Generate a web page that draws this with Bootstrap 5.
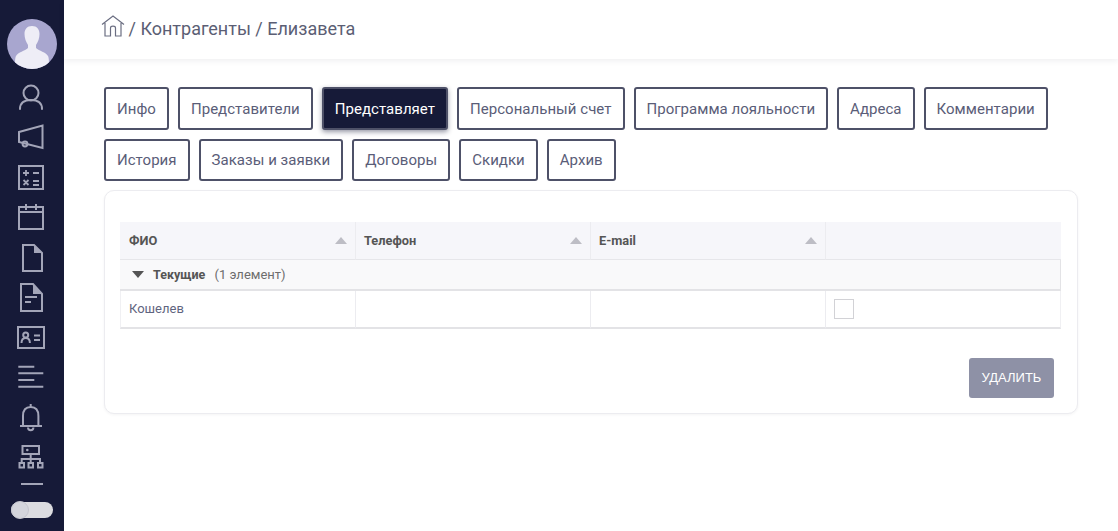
<!DOCTYPE html>
<html lang="ru">
<head>
<meta charset="utf-8">
<title>Елизавета</title>
<link href="https://cdn.jsdelivr.net/npm/bootstrap@5.3.0/dist/css/bootstrap.min.css" rel="stylesheet">
<style>
html,body{height:100%;overflow:hidden}
body{font-family:Roboto,"Liberation Sans",sans-serif;background:#fff;color:#50536c}
.app-shell{height:531px}
.side-rail{width:64px;flex:none;background:#161a38;padding-top:19px;height:531px;overflow:hidden}
.ava{width:50px;height:50px;display:block;margin-bottom:8px;flex:none}
.rail-ico{display:block;width:40px;height:40px;flex:none;fill:none;stroke:#a3a5b8;stroke-width:2}
.rail-ico .solid{fill:#a3a5b8;stroke:none}
.rail-dash{width:22px;height:2px;background:#a3a5b8;margin-top:6px;flex:none}
.rail-toggle{width:42px;height:16px;border-radius:8px;background:#dcdce0;margin-top:17px;flex:none;position:relative}
.rail-knob{position:absolute;left:0;top:-1px;width:18px;height:18px;border-radius:50%;background:#d4d5dc;border:1px solid #c4c5ce}
.main-pane{min-width:0}
.top-head{height:59px;box-shadow:0 2px 6px rgba(30,30,60,.07);padding:0 0 3px 37px;font-size:18px;color:#5b5e74}
.top-head svg{flex:none;margin-right:3.5px}
.tab-wrap{padding:28px 40px 0;gap:9px}
.tab-btn{font-size:15px;line-height:18px;padding:10.5px 11px;border:2px solid #4e5168;border-radius:3px;background:#fff;color:#5a5d78;letter-spacing:.035px}
.tab-btn.is-on{background:#161a38;color:#fff;box-shadow:0 2px 5px rgba(22,26,56,.45)}
.tab-btn.low-row{padding-top:10px;padding-bottom:10px}
.panel-box{margin:9px 0 0 40px;width:974px;height:224px;border:1px solid #ececf0;border-radius:10px;padding:31px 16px 0 15px;box-shadow:0 1px 3px rgba(30,30,60,.05)}
.grid-tbl{table-layout:fixed;width:941px;border-collapse:separate;border-spacing:0;margin:0}
.grid-tbl th{height:38px;background:#f6f6fa;font-weight:700;color:#555;padding:0 9px 0 8px;border-right:1px solid #ececf0;border-bottom:1px solid #e6e6ea;position:relative;font-size:12.8px}
.grid-tbl th:first-child{padding-left:9px}
.grid-tbl th:last-child{border-right:0}
.sort-up{position:absolute;right:8px;top:15px;width:0;height:0;border-left:6px solid transparent;border-right:6px solid transparent;border-bottom:7px solid #bdbdc5}
.group-row td{height:31px;background:#f9f9fa;border-bottom:2px solid #e3e3e6;border-right:1px solid #e3e3e6;padding:0 0 0 12px;color:#555;font-size:12.5px}
.group-caret{display:inline-block;width:0;height:0;border-left:6px solid transparent;border-right:6px solid transparent;border-top:7px solid #555;margin-right:9px;vertical-align:1px}
.group-row span{color:#6d6d6d;margin-left:6px;font-size:13px}
.data-row td{height:38px;padding:0 8px;border-right:1px solid #ececf0;border-bottom:2px solid #e3e3e6;color:#5f6580;font-size:13px;vertical-align:middle}
.data-row td:first-child{border-left:1px solid #f0f0f3}
.data-row td:last-child{border-right:1px solid #f0f0f3}
.check-box{display:block;width:20px;height:20px;border:1px solid #d2d2d6;background:#fff}
.foot-row{padding:29px 7px 0 0}
.del-btn{width:85px;height:40px;background:#8e91a6;border:0;border-radius:3px;color:#fff;font-size:13px;text-transform:uppercase;padding:0;font-family:"Liberation Sans",sans-serif}
</style>
</head>
<body>
<div class="app-shell d-flex">
  <nav class="side-rail d-flex flex-column align-items-center">
    <svg class="ava" viewBox="0 0 50 50"><defs><clipPath id="ac"><circle cx="25" cy="25" r="25"/></clipPath></defs><circle cx="25" cy="25" r="25" fill="#a8a6cf"/><g clip-path="url(#ac)" fill="#eeedf6"><path d="M25 7c5 0 7.500 3.500 7.500 8 0 4-1.500 8-3.500 11v3c3 3 10 4 12 8 1 2 1 5 1 13H8c0-8 0-11 1-13 2-4 9-5 12-8v-3c-2-3-3.500-7-3.500-11 0-4.500 2.500-8 7.500-8z"/></g></svg>
    <svg class="rail-ico" viewBox="0 0 40 40"><circle cx="19" cy="16" r="7.500"/><path d="M8 32c0-6 4-9 11-9s11 3 11 9" stroke-linecap="round"/></svg>
    <svg class="rail-ico" viewBox="0 0 40 40"><path d="M7 15 30.500 8.500V31L7 25z"/><circle cx="13" cy="27" r="2.400"/></svg>
    <svg class="rail-ico" viewBox="0 0 40 40"><rect x="7" y="9" width="24" height="23"/><path d="M11 16h6M14 13v6M21 16h6M11.500 23l5 5M16.500 23l-5 5M21 24h6M21 28h6" stroke-width="1.800"/></svg>
    <svg class="rail-ico" viewBox="0 0 40 40"><rect x="7" y="10" width="24" height="22"/><path d="M7 15h24M14 7v6M24 7v6"/></svg>
    <svg class="rail-ico" viewBox="0 0 40 40"><path d="M11 8h11l8 8v18H11z"/><path class="solid" d="M22 8l8 8h-8z"/></svg>
    <svg class="rail-ico" viewBox="0 0 40 40"><path d="M9 7h12l9 10v17H9z"/><path class="solid" d="M21 7l9 10h-9z"/><path d="M13 20h12M13 25h6"/></svg>
    <svg class="rail-ico" viewBox="0 0 40 40"><rect x="6" y="10" width="26" height="21"/><circle cx="13.700" cy="18" r="2.500"/><path d="M9.500 26c0-3 1.500-5 4.200-5s4.200 2 4.200 5M22 18.500h6M22 23h6"/></svg>
    <svg class="rail-ico" viewBox="0 0 40 40"><path d="M6.300 9.700h16M6.300 16.300h25M6.300 23h16M6.300 29.700h25"/></svg>
    <svg class="rail-ico" viewBox="0 0 40 40"><path d="M18.700 7v3M11 29V19c0-6 3-9 7.700-9s7.700 3 7.700 9v10M8 29h22"/><path d="M16 30.500c0 3.500 5.400 3.500 5.400 0"/></svg>
    <svg class="rail-ico" viewBox="0 0 40 40"><rect x="10.500" y="9" width="16.500" height="8"/><circle class="solid" cx="15.300" cy="13" r="1.300"/><path d="M18.700 17v9M9.700 26v-4h18.300v4"/><rect x="7.500" y="26" width="4.500" height="4.500"/><rect x="16.500" y="26" width="4.500" height="4.500"/><rect x="26" y="26" width="4.500" height="4.500"/></svg>
    <div class="rail-dash"></div>
    <div class="rail-toggle"><div class="rail-knob"></div></div>
  </nav>
  <main class="main-pane flex-grow-1">
    <header class="top-head d-flex align-items-center">
      <svg width="24" height="24" viewBox="0 -1 24 24" fill="none" stroke="#6b6e82" stroke-width="1.200" class="mb-1"><path d="M1 9.500 12 1l11 8.500M4 8v13h5.500v-8c0-2.500 5-2.500 5 0v8H20V8"/></svg>
      <span>/ Контрагенты / Елизавета</span>
    </header>
    <div class="tab-wrap d-flex flex-wrap">
      <button class="tab-btn" type="button">Инфо</button>
      <button class="tab-btn" type="button">Представители</button>
      <button class="tab-btn is-on" type="button">Представляет</button>
      <button class="tab-btn" type="button">Персональный счет</button>
      <button class="tab-btn" type="button">Программа лояльности</button>
      <button class="tab-btn" type="button">Адреса</button>
      <button class="tab-btn" type="button">Комментарии</button>
      <button class="tab-btn low-row" type="button">История</button>
      <button class="tab-btn low-row" type="button">Заказы и заявки</button>
      <button class="tab-btn low-row" type="button">Договоры</button>
      <button class="tab-btn low-row" type="button">Скидки</button>
      <button class="tab-btn low-row" type="button">Архив</button>
    </div>
    <section class="panel-box bg-white">
      <table class="grid-tbl">
        <colgroup><col style="width:236px"><col style="width:235px"><col style="width:235px"><col></colgroup>
        <thead><tr><th>ФИО<i class="sort-up"></i></th><th>Телефон<i class="sort-up"></i></th><th>E-mail<i class="sort-up"></i></th><th></th></tr></thead>
        <tbody>
          <tr class="group-row"><td colspan="4"><i class="group-caret"></i><b>Текущие</b> <span>(1 элемент)</span></td></tr>
          <tr class="data-row"><td>Кошелев</td><td></td><td></td><td><i class="check-box"></i></td></tr>
        </tbody>
      </table>
      <div class="foot-row d-flex justify-content-end"><button class="del-btn" type="button">Удалить</button></div>
    </section>
  </main>
</div>
<script src="https://cdn.jsdelivr.net/npm/bootstrap@5.3.0/dist/js/bootstrap.bundle.min.js"></script>
</body>
</html>
